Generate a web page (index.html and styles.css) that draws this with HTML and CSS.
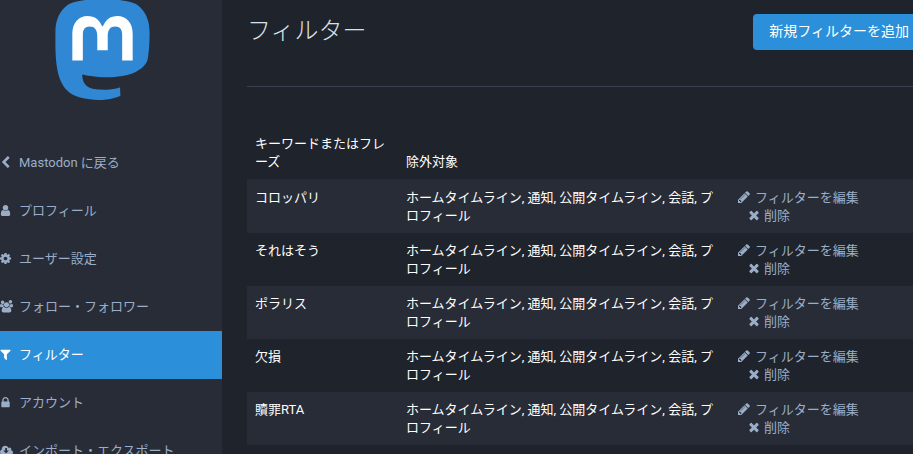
FILE: index.html
```html
<!DOCTYPE html>
<html lang="ja">
<head>
    <meta charset="UTF-8">
    <meta name="viewport" content="width=device-width, initial-scale=1.0">
    <title>フィルター - Mastodon</title>
    <link rel="stylesheet" href="styles.css">
</head>
<body>

    <svg class="icon-defs" xmlns="http://www.w3.org/2000/svg">
        <symbol id="i-back" viewBox="0 0 1792 1792"><path d="M1427 301l-531 531 531 531q19 19 19 45t-19 45l-166 166q-19 19-45 19t-45-19l-742-742q-19-19-19-45t19-45l742-742q19-19 45-19t45 19l166 166q19 19 19 45t-19 45z"/></symbol>
        <symbol id="i-user" viewBox="0 0 1792 1792"><path d="M1536 1399q0 109-62.5 187t-150.5 78h-854q-88 0-150.5-78t-62.5-187q0-85 8.5-160.5t31.5-152 58.5-131 94-89 134.5-34.5q131 128 313 128t313-128q76 0 134.5 34.5t94 89 58.5 131 31.5 152 8.5 160.5zm-256-887q0 159-112.5 271.5t-271.5 112.5-271.5-112.5-112.5-271.5 112.5-271.5 271.5-112.5 271.5 112.5 112.5 271.5z"/></symbol>
        <symbol id="i-cog" viewBox="0 0 1792 1792"><path d="M1152 896q0-106-75-181t-181-75-181 75-75 181 75 181 181 75 181-75 75-181zm512-109v222q0 12-8 23t-20 13l-185 28q-19 54-39 91 35 50 107 138 10 12 10 25t-9 23q-27 37-99 108t-94 71q-12 0-26-9l-138-108q-44 23-91 38-16 136-29 186-7 28-36 28h-222q-14 0-24.5-8.5t-11.5-21.5l-28-184q-49-16-90-37l-141 107q-10 9-25 9-14 0-25-11-126-114-165-168-7-10-7-23 0-12 8-23 15-21 51-66.5t54-70.5q-27-50-41-99l-183-27q-13-2-21-12.5t-8-23.5v-222q0-12 8-23t19-13l186-28q14-46 39-92-40-57-107-138-10-12-10-24 0-10 9-23 26-36 98.5-107.5t94.5-71.5q13 0 26 10l138 107q44-23 91-38 16-136 29-186 7-28 36-28h222q14 0 24.5 8.5t11.5 21.5l28 184q49 16 90 37l142-107q9-9 24-9 13 0 25 10 129 119 165 170 7 8 7 22 0 12-8 23-15 21-51 66.5t-54 70.5q26 50 41 98l183 28q13 2 21 12.5t8 23.5z"/></symbol>
        <symbol id="i-users" viewBox="0 0 1920 1792"><path d="M593 896q-162 5-265 128h-134q-82 0-138-40.5t-56-118.5q0-353 124-353 6 0 43.5 21t97.5 42.5 119 21.5q67 0 133-23-5 37-5 66 0 139 81 256zm1071 637q0 120-73 189.5t-194 69.5h-874q-121 0-194-69.5t-73-189.5q0-53 3.5-103.5t14-109 26.5-108.5 43-97.5 62-81 85.5-53.5 111.5-20q10 0 43 21.5t73 48 107 48 135 21.5 135-21.5 107-48 73-48 43-21.5q61 0 111.5 20t85.5 53.5 62 81 43 97.5 26.5 108.5 14 109 3.5 103.5zm-1024-1277q0 106-75 181t-181 75-181-75-75-181 75-181 181-75 181 75 75 181zm704 384q0 159-112.5 271.5t-271.5 112.5-271.5-112.5-112.5-271.5 112.5-271.5 271.5-112.5 271.5 112.5 112.5 271.5zm576 225q0 78-56 118.5t-138 40.5h-134q-103-123-265-128 81-117 81-256 0-29-5-66 66 23 133 23 59 0 119-21.5t97.5-42.5 43.5-21q124 0 124 353zm-128-673q0 106-75 181t-181 75-181-75-75-181 75-181 181-75 181 75 75 181z"/></symbol>
        <symbol id="i-filter" viewBox="0 0 1792 1792"><path d="M1595 295q17 41-14 70l-493 493v742q0 42-39 59-13 5-25 5-27 0-45-19l-256-256q-19-19-19-45v-486l-493-493q-31-29-14-70 17-39 59-39h1280q42 0 59 39z"/></symbol>
        <symbol id="i-lock" viewBox="0 0 1792 1792"><path d="M640 768h512v-192q0-106-75-181t-181-75-181 75-75 181v192zm832 96v576q0 40-28 68t-68 28h-960q-40 0-68-28t-28-68v-576q0-40 28-68t68-28h32v-192q0-184 132-316t316-132 316 132 132 316v192h32q40 0 68 28t28 68z"/></symbol>
        <symbol id="i-cloud" viewBox="0 0 1920 1792"><path d="M1280 928q0-14-9-23t-23-9h-224v-352q0-13-9.5-22.5t-22.5-9.5h-192q-13 0-22.5 9.5t-9.5 22.5v352h-224q-14 0-23 9t-9 23q0 12 9 22l352 352q9 9 22 9t22-9l352-352q9-9 9-22zm640 288q0 159-112.5 271.5t-271.5 112.5h-1088q-185 0-316.5-131.5t-131.5-316.5q0-130 70-240t188-165q-2-30-2-43 0-212 150-362t362-150q156 0 285.5 87t188.5 231q71-62 166-62 106 0 181 75t75 181q0 76-41 138 130 31 213.5 135.5t83.5 238.5z"/></symbol>
        <symbol id="i-pencil" viewBox="0 0 1792 1792"><path d="M491 1536l91-91-235-235-91 91v107h128v128h107zm523-928q0-22-22-22-10 0-17 7l-542 542q-7 7-7 17 0 22 22 22 10 0 17-7l542-542q7-7 7-17zm-54-192l416 416-832 832h-416v-416zm683 96q0 53-37 90l-166 166-416-416 166-165q36-38 90-38 53 0 91 38l235 234q37 39 37 91z"/></symbol>
        <symbol id="i-times" viewBox="0 0 1792 1792"><path d="M1490 1322q0 40-28 68l-136 136q-28 28-68 28t-68-28l-294-294-294 294q-28 28-68 28t-68-28l-136-136q-28-28-28-68t28-68l294-294-294-294q-28-28-28-68t28-68l136-136q28-28 68-28t68 28l294 294 294-294q28-28 68-28t68 28l136 136q28 28 28 68t-28 68l-294 294 294 294q28 28 28 68z"/></symbol>
    </svg>

    <div class="admin-wrapper">
        <aside class="sidebar">
            <svg class="logo" viewBox="0 0 24 24" xmlns="http://www.w3.org/2000/svg">
                <rect class="logo-m" x="4.6" y="3.9" width="14.8" height="10.9"/>
                <path class="logo-body" d="M23.193 7.879c0-5.206-3.411-6.732-3.411-6.732C18.062.357 15.108.025 12.041 0h-.076c-3.068.025-6.02.357-7.74 1.147 0 0-3.411 1.526-3.411 6.732 0 1.192-.023 2.618.015 4.129.124 5.092.934 10.109 5.641 11.355 2.17.574 4.034.695 5.535.612 2.722-.15 4.25-.972 4.25-.972l-.09-1.975s-1.945.613-4.129.539c-2.165-.074-4.449-.233-4.799-2.891a5.499 5.499 0 0 1-.048-.745s2.125.52 4.817.643c1.646.075 3.19-.097 4.758-.283 3.007-.359 5.625-2.212 5.954-3.905.517-2.665.475-6.507.475-6.507zm-4.024 6.709h-2.497V8.469c0-1.29-.543-1.944-1.628-1.944-1.2 0-1.802.776-1.802 2.312v3.349h-2.483v-3.35c0-1.536-.602-2.312-1.802-2.312-1.085 0-1.628.655-1.628 1.945v6.119H4.832V8.284c0-1.289.328-2.313.987-3.07.68-.758 1.569-1.146 2.674-1.146 1.278 0 2.246.491 2.886 1.474L12 6.585l.622-1.043c.64-.983 1.608-1.474 2.886-1.474 1.104 0 1.994.388 2.674 1.146.658.757.986 1.781.986 3.07v6.304z"/>
            </svg>
            <nav class="side-nav">
                <a class="nav-item" href="#"><svg class="nav-icon"><use href="#i-back"/></svg>Mastodon に戻る</a>
                <a class="nav-item" href="#"><svg class="nav-icon"><use href="#i-user"/></svg>プロフィール</a>
                <a class="nav-item" href="#"><svg class="nav-icon"><use href="#i-cog"/></svg>ユーザー設定</a>
                <a class="nav-item" href="#"><svg class="nav-icon wide"><use href="#i-users"/></svg>フォロー・フォロワー</a>
                <a class="nav-item selected" href="#"><svg class="nav-icon"><use href="#i-filter"/></svg>フィルター</a>
                <a class="nav-item" href="#"><svg class="nav-icon"><use href="#i-lock"/></svg>アカウント</a>
                <a class="nav-item" href="#"><svg class="nav-icon wide"><use href="#i-cloud"/></svg>インポート・エクスポート</a>
            </nav>
        </aside>

        <main class="content">
            <div class="content-heading">
                <h2>フィルター</h2>
                <a class="button" href="#">新規フィルターを追加</a>
            </div>
            <hr class="spacer">

            <table class="table">
                <thead>
                    <tr>
                        <th class="col-phrase">キーワードまたはフレーズ</th>
                        <th class="col-context">除外対象</th>
                        <th></th>
                    </tr>
                </thead>
                <tbody>
                    <tr>
                        <td>コロッパリ</td>
                        <td>ホームタイムライン, 通知, 公開タイムライン, 会話, プロフィール</td>
                        <td><a class="action-link" href="#"><svg class="action-icon"><use href="#i-pencil"/></svg>フィルターを編集</a><a class="action-link" href="#"><svg class="action-icon"><use href="#i-times"/></svg>削除</a></td>
                    </tr>
                    <tr>
                        <td>それはそう</td>
                        <td>ホームタイムライン, 通知, 公開タイムライン, 会話, プロフィール</td>
                        <td><a class="action-link" href="#"><svg class="action-icon"><use href="#i-pencil"/></svg>フィルターを編集</a><a class="action-link" href="#"><svg class="action-icon"><use href="#i-times"/></svg>削除</a></td>
                    </tr>
                    <tr>
                        <td>ポラリス</td>
                        <td>ホームタイムライン, 通知, 公開タイムライン, 会話, プロフィール</td>
                        <td><a class="action-link" href="#"><svg class="action-icon"><use href="#i-pencil"/></svg>フィルターを編集</a><a class="action-link" href="#"><svg class="action-icon"><use href="#i-times"/></svg>削除</a></td>
                    </tr>
                    <tr>
                        <td>欠損</td>
                        <td>ホームタイムライン, 通知, 公開タイムライン, 会話, プロフィール</td>
                        <td><a class="action-link" href="#"><svg class="action-icon"><use href="#i-pencil"/></svg>フィルターを編集</a><a class="action-link" href="#"><svg class="action-icon"><use href="#i-times"/></svg>削除</a></td>
                    </tr>
                    <tr>
                        <td>贖罪RTA</td>
                        <td>ホームタイムライン, 通知, 公開タイムライン, 会話, プロフィール</td>
                        <td><a class="action-link" href="#"><svg class="action-icon"><use href="#i-pencil"/></svg>フィルターを編集</a><a class="action-link" href="#"><svg class="action-icon"><use href="#i-times"/></svg>削除</a></td>
                    </tr>
                </tbody>
            </table>
        </main>
    </div>

</body>
</html>
```

FILE: styles.css
```css
html, body {
    height: 100%;
    margin: 0;
    overflow: hidden;
}

body {
    font-family: Roboto, "Noto Sans CJK JP", sans-serif;
    font-size: 13px;
    line-height: 18px;
    background-color: #1f232b;
    color: #fff;
}

a {
    text-decoration: none;
}

.icon-defs {
    display: none;
}

.admin-wrapper {
    display: flex;
    width: 925px;
    height: 454px;
}

.sidebar {
    flex: 0 0 222px;
    height: 454px;
    overflow: hidden;
    background-color: #282c37;
}

.logo {
    display: block;
    width: 101px;
    height: 101px;
    margin: -1px 0 39px 52px;
}

.logo-m {
    fill: #fff;
}

.logo-body {
    fill: #3088d4;
}

.nav-item {
    display: flex;
    align-items: center;
    box-sizing: border-box;
    height: 48px;
    padding-bottom: 1px;
    color: #9baec8;
}

.nav-item.selected {
    background-color: #2b90d9;
    color: #fff;
}

.nav-icon {
    flex: 0 0 13px;
    width: 13px;
    height: 13px;
    margin: 0 7px 0 -1px;
    fill: currentColor;
}

.nav-icon.wide {
    margin: 0 6px 0 0;
}

.content {
    flex: 1;
    margin-left: 25px;
}

.content-heading {
    display: flex;
    justify-content: space-between;
    align-items: flex-start;
    height: 86px;
}

.content-heading h2 {
    margin: 13px 0 0;
    font-size: 24px;
    line-height: 36px;
    font-weight: 300;
    color: #d9e1e8;
}

.button {
    margin-top: 14px;
    padding: 0 16px 1px;
    font-size: 14px;
    line-height: 35px;
    border-radius: 4px;
    background-color: #2b90d9;
    color: #fff;
}

.spacer {
    height: 1px;
    margin: 0 0 39px;
    border: 0;
    background-color: #393f4f;
}

.table {
    width: 100%;
    border-collapse: collapse;
    table-layout: fixed;
}

.table th,
.table td {
    text-align: left;
    vertical-align: top;
}

.table th {
    padding: 9px 8px 8px;
    vertical-align: bottom;
    font-weight: 400;
}

.table td {
    padding: 9px 8px 8px;
}

.table tbody tr:first-child td {
    padding-top: 10px;
}

.table tbody tr:nth-child(odd) {
    background-color: #282c37;
}

.col-phrase {
    width: 135px;
    line-break: loose;
}

.col-context {
    width: 316px;
}

.action-link {
    display: block;
    padding-left: 10px;
    color: #9baec8;
}

.action-link:first-child {
    padding-left: 0;
}

.action-link:first-child .action-icon {
    margin-right: 4px;
}

.action-icon {
    width: 14px;
    height: 14px;
    margin: 0 3px 0 -1px;
    vertical-align: -2px;
    fill: currentColor;
}
```
